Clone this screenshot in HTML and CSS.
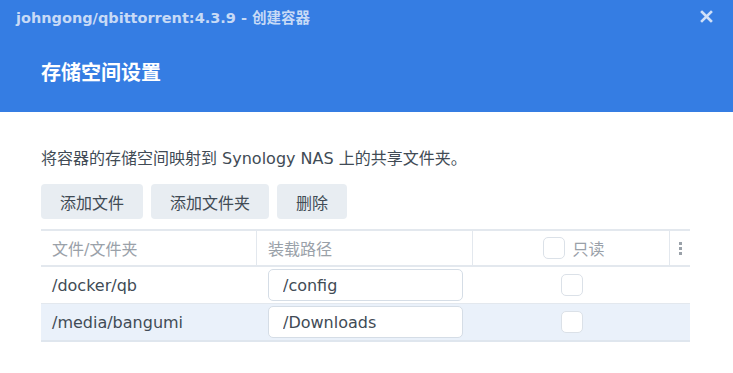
FILE: index.html
```html
<!DOCTYPE html>
<html lang="zh-CN">
  <head>
    <meta charset="UTF-8" />
    <meta name="viewport" content="width=device-width, initial-scale=1.0" />
    <title>创建容器</title>
    <link rel="stylesheet" href="styles.css">
  </head>

  <body>
    <div id="dialog">
      <div class="header">
        <div class="titlebar">
          <span class="title">johngong/qbittorrent:4.3.9 - 创建容器</span>
          <svg class="close" width="13" height="13" viewBox="0 0 13 13">
            <path d="M2 2 L11 11 M11 2 L2 11" stroke="#cfe0f8" stroke-width="2.6" stroke-linecap="square" />
          </svg>
        </div>
        <h1>存储空间设置</h1>
      </div>

      <div class="body">
        <p class="desc">将容器的存储空间映射到 Synology NAS 上的共享文件夹。</p>
        <div class="toolbar">
          <button class="btn">添加文件</button>
          <button class="btn">添加文件夹</button>
          <button class="btn">删除</button>
        </div>

        <div class="grid">
          <div class="row head">
            <div class="cell c1">文件/文件夹</div>
            <div class="cell c2">装载路径</div>
            <div class="cell c3"><span class="check"></span><span>只读</span></div>
            <div class="cell c4"><span class="kebab"><i></i><i></i><i></i></span></div>
          </div>
          <div class="row">
            <div class="cell c1">/docker/qb</div>
            <div class="cell c2"><input type="text" value="/config" /></div>
            <div class="cell c3"><span class="check"></span></div>
            <div class="cell c4"></div>
          </div>
          <div class="row alt">
            <div class="cell c1">/media/bangumi</div>
            <div class="cell c2"><input type="text" value="/Downloads" /></div>
            <div class="cell c3"><span class="check"></span></div>
            <div class="cell c4"></div>
          </div>
        </div>
      </div>
    </div>
  </body>
</html>
```

FILE: styles.css
```css
body {
  margin: 0;
  background-color: #ffffff;
  font-family: "DejaVu Sans", "Noto Sans CJK SC", sans-serif;
  color: #414b55;
}

#dialog {
  width: 733px;
  height: 373px;
  overflow: hidden;
}

.header {
  background-color: #357de3;
  height: 112px;
  box-sizing: border-box;
}

.titlebar {
  display: flex;
  justify-content: space-between;
  align-items: center;
  height: 33px;
  padding: 0 20px 0 16px;
}

.title {
  font-size: 14.5px;
  font-weight: bold;
  color: #c7daf6;
}

.close {
  margin-top: -1px;
}

.header h1 {
  margin: 0;
  padding: 28px 0 0 41px;
  font-size: 20px;
  font-weight: bold;
  color: #ffffff;
  line-height: 24px;
}

.body {
  padding: 0 43px 0 41px;
}

.desc {
  margin: 0;
  padding-top: 37px;
  font-size: 16px;
  line-height: 20px;
  color: #414b55;
}

.toolbar {
  display: flex;
  gap: 8px;
  margin-top: 15px;
}

.btn {
  height: 35px;
  padding: 0 19px;
  border: none;
  border-radius: 4px;
  background-color: #e8edf2;
  font-family: "DejaVu Sans", "Noto Sans CJK SC", sans-serif;
  font-size: 16px;
  color: #414b55;
}

.grid {
  margin-top: 10px;
  border-top: 2px solid #e3e8ee;
}

.row {
  display: flex;
  height: 36px;
  border-bottom: 1px solid #e3e8ee;
}

.row.head {
  height: 34px;
  border-bottom: 2px solid #e3e8ee;
  color: #9aa1a9;
}

.row.alt {
  background-color: #eaf1fa;
  border-bottom: 2px solid #dfe6ee;
}

.cell {
  display: flex;
  align-items: center;
  box-sizing: border-box;
  font-size: 16px;
}

.c1 {
  width: 216px;
  padding-left: 11px;
}

.c2 {
  width: 216px;
  padding-left: 11px;
}

.c3 {
  width: 197px;
  justify-content: center;
  gap: 7px;
}

.c4 {
  width: 20px;
  justify-content: center;
}

.row.head .c1,
.row.head .c2,
.row.head .c3 {
  border-right: 1px solid #e3e8ee;
}

.row.head .c3 {
  padding-left: 6px;
}

.c2 input {
  width: 195px;
  height: 32px;
  box-sizing: border-box;
  border: 1px solid #d5dde6;
  border-radius: 5px;
  padding: 0 14px;
  font-family: "DejaVu Sans", "Noto Sans CJK SC", sans-serif;
  font-size: 16px;
  color: #414b55;
  background-color: #ffffff;
}

.check {
  display: inline-block;
  width: 22px;
  height: 22px;
  box-sizing: border-box;
  border: 1px solid #dbe1e8;
  border-radius: 5px;
  background-color: #ffffff;
}

.kebab {
  display: flex;
  flex-direction: column;
  gap: 2px;
}

.kebab i {
  display: block;
  width: 3px;
  height: 3px;
  background-color: #9aa1a9;
}
```
